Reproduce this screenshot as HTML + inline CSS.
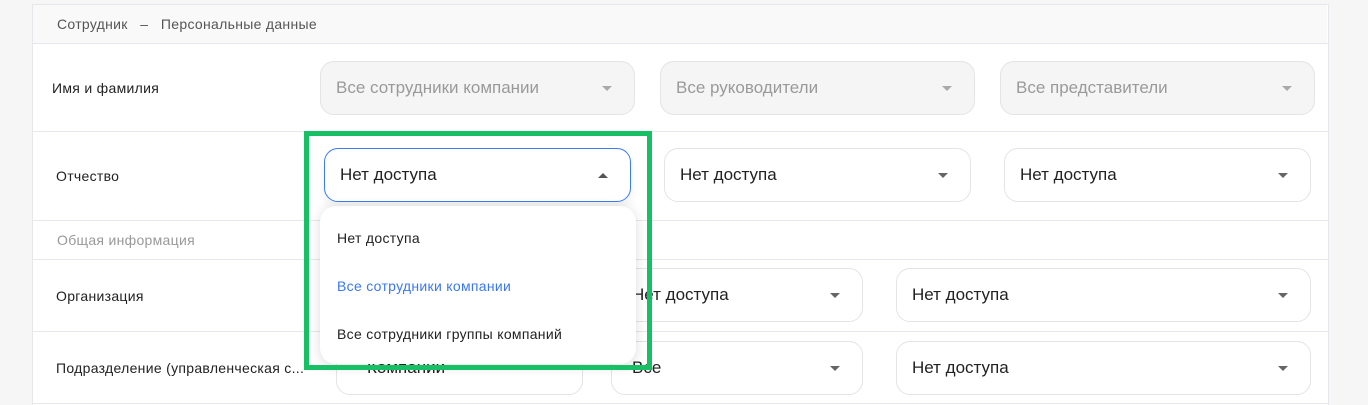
<!DOCTYPE html>
<html><head><meta charset="utf-8"><style>
body{margin:0;width:1368px;height:404px;background:#f6f6f7;font-family:"Liberation Sans",sans-serif;position:relative;overflow:hidden}
.card{position:absolute;left:32px;top:4px;width:1295px;height:400px;background:#fff;border-left:1px solid #e6e7ea;border-right:1px solid #e6e7ea;border-top:1px solid #e6e7ea}
.a{position:absolute}
.line{position:absolute;left:32px;width:1296px;height:1px;background:#e6e7ea}
.lbl{position:absolute;font-size:14px;color:#222;letter-spacing:0.3px}
.sel{position:absolute;height:54px;box-sizing:border-box;border:1px solid #e4e4e6;border-radius:14px;background:#fff;font-size:17px;color:#222;line-height:52px;padding-left:15px}
.sel.dis{background:#f5f5f6;color:#9a9a9a}
.sel .ar{position:absolute;right:22px;top:24px;width:0;height:0;border-left:5px solid transparent;border-right:5px solid transparent;border-top:5px solid #666}
.sel.dis .ar{border-top-color:#aaa}
</style></head><body>
<div class="card"></div>
<div class="a" style="left:33px;top:5px;width:1294px;height:38px;background:#f9f9fa"></div>
<div class="a" style="left:57px;top:16px;font-size:14px;color:#555;letter-spacing:0.3px">Сотрудник &nbsp; – &nbsp; Персональные данные</div>
<div class="line" style="top:43px"></div>
<div class="line" style="top:131px"></div>
<div class="line" style="top:220px"></div>
<div class="line" style="top:259px"></div>
<div class="line" style="top:331px"></div>
<div class="line" style="top:403px"></div>
<div class="lbl" style="left:52px;top:80px">Имя и фамилия</div>
<div class="lbl" style="left:56px;top:168px">Отчество</div>
<div class="a" style="left:57px;top:232px;font-size:14px;color:#999;letter-spacing:0.3px">Общая информация</div>
<div class="lbl" style="left:56px;top:288px">Организация</div>
<div class="lbl" style="left:56px;top:360px">Подразделение (управленческая с...</div>

<div class="sel dis" style="left:320px;top:61px;width:315px">Все сотрудники компании<span class="ar"></span></div>
<div class="sel dis" style="left:660px;top:61px;width:315px">Все руководители<span class="ar"></span></div>
<div class="sel dis" style="left:1000px;top:61px;width:315px">Все представители<span class="ar"></span></div>

<div class="sel" style="left:324px;top:148px;width:307px;border-color:#3b7cf0;box-shadow:0 6px 10px rgba(0,0,0,.06)">Нет доступа<span class="ar" style="border-top:none;border-bottom:5px solid #555"></span></div>
<div class="sel" style="left:664px;top:148px;width:307px">Нет доступа<span class="ar"></span></div>
<div class="sel" style="left:1004px;top:148px;width:307px">Нет доступа<span class="ar"></span></div>

<div class="sel" style="left:611px;top:268px;width:252px;padding-left:20px">Нет доступа<span class="ar"></span></div>
<div class="sel" style="left:896px;top:268px;width:415px">Нет доступа<span class="ar"></span></div>
<div class="sel" style="left:336px;top:341px;width:247px;padding-left:30px">Компании</div>
<div class="sel" style="left:611px;top:341px;width:252px;padding-left:20px">Все<span class="ar"></span></div>
<div class="sel" style="left:896px;top:341px;width:415px">Нет доступа<span class="ar"></span></div>

<div class="a" style="left:320px;top:206px;width:316px;height:158px;background:#fff;border-radius:16px;box-shadow:0 2px 12px rgba(0,0,0,.14)"></div>
<div class="a" style="left:337px;top:230px;font-size:14px;color:#222;letter-spacing:0.3px">Нет доступа</div>
<div class="a" style="left:337px;top:278px;font-size:14px;color:#3b78f0;letter-spacing:0.3px">Все сотрудники компании</div>
<div class="a" style="left:337px;top:326px;font-size:14px;color:#222;letter-spacing:0.3px">Все сотрудники группы компаний</div>

<div class="a" style="left:304px;top:131px;width:338px;height:229px;border:5px solid #17c064"></div>
</body></html>
